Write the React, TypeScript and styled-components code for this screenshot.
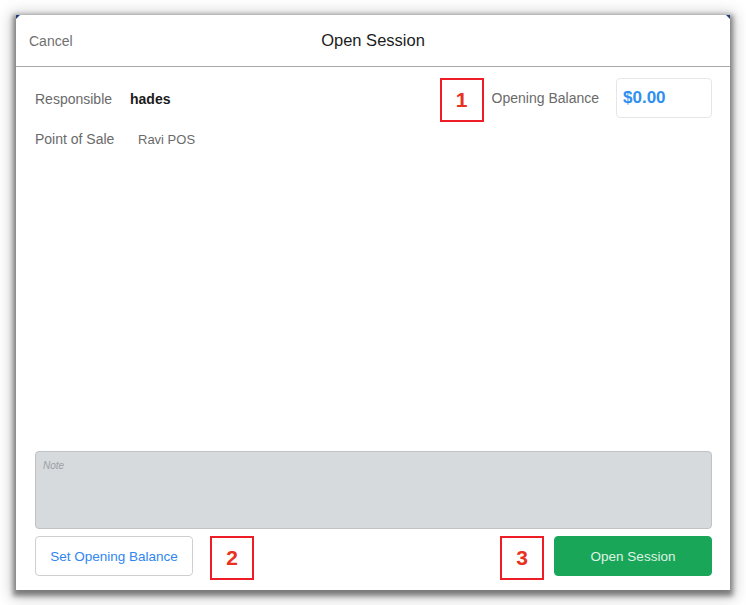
import React from "react";
import styled, { createGlobalStyle } from "styled-components";

const Global = createGlobalStyle`
  html, body { margin: 0; padding: 0; background: #ffffff; }
  body { font-family: "Liberation Sans", Arial, sans-serif; }
  * { box-sizing: border-box; }
`;

const Page = styled.div`
  width: 746px;
  height: 605px;
  padding: 15px 16px 15px 16px;
  background: #ffffff;
`;

const Panel = styled.div`
  position: relative;
  width: 714px;
  height: 575px;
  background: #ffffff;
  display: flex;
  flex-direction: column;
  box-shadow: 0 3px 5px 3px rgba(0, 0, 0, 0.42), 0 3px 14px 5px rgba(0, 0, 0, 0.2);
`;

const Corner = styled.div<{ $side: "left" | "right" }>`
  position: absolute;
  top: 0;
  ${(p) => (p.$side === "left" ? "left: 0;" : "right: 0;")}
  width: 0;
  height: 0;
  border-top: 4px solid #1f3f78;
  ${(p) =>
    p.$side === "left"
      ? "border-right: 4px solid transparent;"
      : "border-left: 4px solid transparent;"}
`;

const Header = styled.div`
  height: 52px;
  flex: none;
  display: grid;
  grid-template-columns: 1fr auto 1fr;
  align-items: center;
  padding: 0 13px;
  border-bottom: 1px solid #a9a9a9;
`;

const Cancel = styled.span`
  font-size: 14px;
  color: #6f6f6f;
`;

const Title = styled.span`
  font-size: 16.5px;
  color: #1c1c1c;
`;

const Body = styled.div`
  flex: 1;
  display: flex;
  flex-direction: column;
  padding: 11px 18px 10px 19px;
`;

const TopRow = styled.div`
  display: flex;
  justify-content: space-between;
  align-items: flex-start;
`;

const InfoList = styled.div`
  display: flex;
  flex-direction: column;
  gap: 22px;
  padding-top: 12px;
`;

const InfoRow = styled.div`
  display: flex;
  align-items: center;
  height: 18px;
`;

const Label = styled.span<{ $w: number }>`
  width: ${(p) => p.$w}px;
  font-size: 14px;
  color: #6a6a6a;
`;

const Value = styled.span<{ $strong?: boolean }>`
  font-size: ${(p) => (p.$strong ? 14 : 13)}px;
  color: ${(p) => (p.$strong ? "#1a1a1a" : "#6a6a6a")};
  font-weight: ${(p) => (p.$strong ? 700 : 400)};
`;

const BalanceGroup = styled.div`
  display: flex;
  align-items: flex-start;
`;

const Marker = styled.div`
  width: 44px;
  height: 44px;
  border: 2px solid #ee1c24;
  display: flex;
  align-items: center;
  justify-content: center;
  font-size: 21px;
  font-weight: 700;
  color: #e8321f;
  flex: none;
  background: #fff;
`;

const BalanceLabel = styled.span`
  font-size: 14px;
  color: #6a6a6a;
  margin: 0 17px 0 8px;
  line-height: 40px;
`;

const BalanceInput = styled.div`
  width: 96px;
  height: 40px;
  border: 1px solid #e6e6e6;
  border-radius: 4px;
  display: flex;
  align-items: center;
  padding-left: 6px;
  font-size: 17px;
  font-weight: 700;
  color: #2f8ff0;
`;

const Spacer = styled.div`
  flex: 1;
`;

const Note = styled.div`
  height: 78px;
  background: #d6dadd;
  border: 1px solid #bfc3c6;
  border-radius: 4px;
  padding: 8px 7px;
  font-size: 10px;
  font-style: italic;
  color: #9aa0a4;
`;

const Footer = styled.div`
  display: flex;
  align-items: flex-start;
  margin-top: 7px;
  height: 44px;
`;

const Button = styled.div<{ $primary?: boolean }>`
  width: 158px;
  height: 40px;
  border-radius: 4px;
  display: flex;
  align-items: center;
  justify-content: center;
  font-size: 13.5px;
  background: ${(p) => (p.$primary ? "#1aa658" : "#ffffff")};
  border: 1px solid ${(p) => (p.$primary ? "#1aa658" : "#cfcfcf")};
  color: ${(p) => (p.$primary ? "#dff3e6" : "#2f86f0")};
`;

const FooterGap = styled.div<{ $w: number }>`
  width: ${(p) => p.$w}px;
  flex: none;
`;

export default function App() {
  return (
    <>
      <Global />
      <Page>
        <Panel>
          <Corner $side="left" />
          <Corner $side="right" />
          <Header>
            <Cancel>Cancel</Cancel>
            <Title>Open Session</Title>
            <span />
          </Header>
          <Body>
            <TopRow>
              <InfoList>
                <InfoRow>
                  <Label $w={95}>Responsible</Label>
                  <Value $strong>hades</Value>
                </InfoRow>
                <InfoRow>
                  <Label $w={103}>Point of Sale</Label>
                  <Value>Ravi POS</Value>
                </InfoRow>
              </InfoList>
              <BalanceGroup>
                <Marker>1</Marker>
                <BalanceLabel>Opening Balance</BalanceLabel>
                <BalanceInput>$0.00</BalanceInput>
              </BalanceGroup>
            </TopRow>
            <Spacer />
            <Note>Note</Note>
            <Footer>
              <Button>Set Opening Balance</Button>
              <FooterGap $w={17} />
              <Marker>2</Marker>
              <Spacer />
              <Marker>3</Marker>
              <FooterGap $w={10} />
              <Button $primary>Open Session</Button>
            </Footer>
          </Body>
        </Panel>
      </Page>
    </>
  );
}
